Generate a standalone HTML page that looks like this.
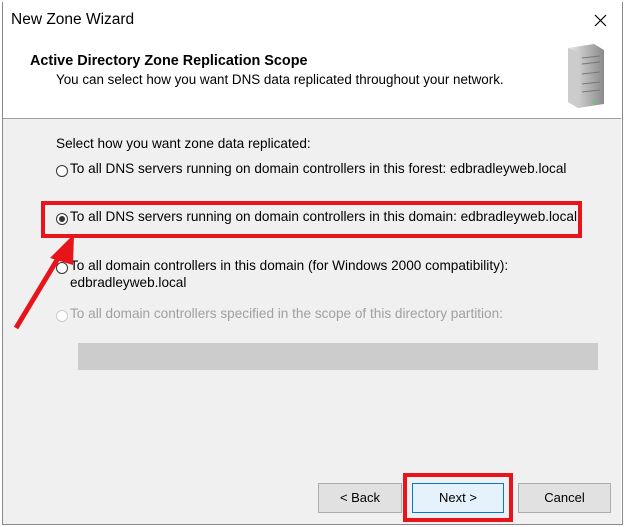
<!DOCTYPE html><html><head><style>
body{margin:0;width:625px;height:527px;background:#fff;position:relative;overflow:hidden;font-family:"Liberation Sans",sans-serif;font-size:12px;color:#000}
.a{position:absolute;white-space:nowrap}
.btn{position:absolute;background:#e1e1e1;border:1px solid #adadad;text-align:center;line-height:28px;font-size:13px}
.r{position:absolute;width:10px;height:10px;border:1px solid #333;border-radius:50%;background:#fff}
.t{font-size:13.6px}
</style></head><body>
<div class="a" style="left:2px;top:2px;width:619px;height:522px;border:1px solid #888;border-top:none"></div>
<div class="a" style="left:11px;top:11px;font-size:15.5px">New Zone Wizard</div>
<svg class="a" style="left:594px;top:14px" width="13" height="13"><path d="M1 1L12 12M12 1L1 12" stroke="#000" stroke-width="1.2"/></svg>
<div class="a" style="left:30px;top:53px;font-weight:bold;font-size:14.4px">Active Directory Zone Replication Scope</div>
<div class="a" style="left:56px;top:72px;font-size:13.4px">You can select how you want DNS data replicated throughout your network.</div>
<svg class="a" style="left:564px;top:44px" width="44" height="64"><defs><linearGradient id="g" x1="0" x2="1"><stop offset="0" stop-color="#e8e8e8"/><stop offset="1" stop-color="#8a8a8a"/></linearGradient></defs><path d="M4 4L30 0L40 6L40 60L14 64L4 58Z" fill="url(#g)"/><path d="M4 4L14 8L14 64L4 58Z" fill="#ccc"/><g stroke="#777"><line x1="18" y1="14" x2="36" y2="12"/><line x1="18" y1="20" x2="36" y2="18"/><line x1="18" y1="30" x2="36" y2="28"/><line x1="18" y1="40" x2="36" y2="38"/><line x1="18" y1="48" x2="36" y2="46"/></g><circle cx="30" cy="58" r="1.5" fill="#6c6"/></svg>
<div class="a" style="left:3px;top:118px;width:618px;height:348px;background:#f0f0f0;border-top:1px solid #a0a0a0;border-bottom:1px solid #a0a0a0"></div>
<div class="a" style="left:3px;top:467px;width:618px;height:57px;background:#f0f0f0"></div>
<div class="a t" style="left:56px;top:136px">Select how you want zone data replicated:</div>
<div class="r" style="left:56px;top:165px"></div>
<div class="a t" style="left:70px;top:161px">To all DNS servers running on domain controllers in this forest: edbradleyweb.local</div>
<div class="r" style="left:56px;top:213px"></div><div class="a" style="left:59px;top:216px;width:6px;height:6px;border-radius:50%;background:#333"></div>
<div class="a t" style="left:70px;top:209px">To all DNS servers running on domain controllers in this domain: edbradleyweb.local</div>
<div class="r" style="left:56px;top:262px"></div>
<div class="a t" style="left:70px;top:258px">To all domain controllers in this domain (for Windows 2000 compatibility):</div>
<div class="a t" style="left:70px;top:275px">edbradleyweb.local</div>
<div class="r" style="left:56px;top:310px;border-color:#ccc"></div>
<div class="a t" style="left:70px;top:306px;color:#a0a0a0">To all domain controllers specified in the scope of this directory partition:</div>
<div class="a" style="left:78px;top:343px;width:520px;height:27px;background:#cccccc"></div>
<div class="a" style="left:41px;top:201px;width:533px;height:29px;border:4px solid #e8141b"></div>
<svg class="a" style="left:0;top:225px" width="100" height="110"><line x1="16" y1="103" x2="60" y2="30" stroke="#e8141b" stroke-width="5"/><path d="M74 9L50 33L73 40Z" fill="#e8141b"/></svg>
<div class="btn" style="left:318px;top:483px;width:82px;height:28px">&lt; Back</div>
<div class="btn" style="left:412px;top:483px;width:90px;height:28px;border-color:#0078d7;background:#e5f1fb">Next &gt;</div>
<div class="btn" style="left:518px;top:483px;width:91px;height:28px">Cancel</div>
<div class="a" style="left:403px;top:473px;width:102px;height:41px;border:4px solid #e8141b"></div>
</body></html>
